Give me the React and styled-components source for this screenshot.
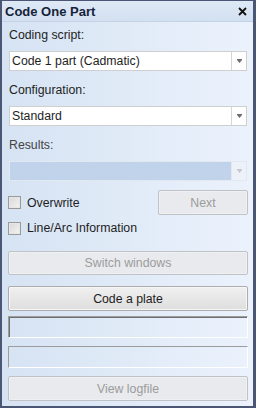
import React from "react";
import styled, { createGlobalStyle } from "styled-components";

const Global = createGlobalStyle`
  html, body { margin: 0; padding: 0; width: 256px; height: 408px; overflow: hidden; }
  body { font-family: "Liberation Sans", Arial, sans-serif; }
`;

const Window = styled.div`
  box-sizing: border-box;
  width: 256px;
  height: 408px;
  border-style: solid;
  border-color: #4b5574;
  border-width: 1px 3px 2px 2px;
  background: linear-gradient(to right, #d6e3f3, #ebf2fc);
  display: flex;
  flex-direction: column;
  font-size: 12.3px;
  color: #1e1e1e;
`;

const TitleBar = styled.div`
  height: 20px;
  flex: none;
  display: flex;
  align-items: center;
  justify-content: space-between;
  padding: 0 6px 0 3px;
  background: linear-gradient(to bottom, #dfe9f6, #d3e0f1);
  border-bottom: 1px solid #c4d2e6;
`;

const Title = styled.span`
  font-weight: bold;
  font-size: 13px;
  color: #15233a;
`;

const Content = styled.div`
  display: flex;
  flex-direction: column;
  padding: 0 5px 0 6px;
`;

const Label = styled.div`
  height: 16px;
  line-height: 16px;
  margin-top: ${(p) => p.$mt}px;
  padding-left: 1px;
  color: ${(p) => (p.$disabled ? "#444" : "#1e1e1e")};
`;

const Select = styled.div`
  box-sizing: border-box;
  height: 20px;
  margin: 8px 1px 0 1px;
  display: flex;
  border: 1px solid ${(p) => (p.$disabled ? "#e2e8f0" : "#cfcfcf")};
  background: ${(p) => (p.$disabled ? "#c1d3ea" : "#fff")};
`;

const SelectText = styled.div`
  flex: 1;
  line-height: 18px;
  padding-left: 2px;
`;

const ArrowBox = styled.div`
  width: 14px;
  border-left: 1px solid ${(p) => (p.$disabled ? "#e2e8f0" : "#d6d6d6")};
  background: ${(p) => (p.$disabled ? "#edf2f8" : "#fff")};
  display: flex;
  align-items: center;
  justify-content: center;
`;

const Arrow = ({ disabled }) => (
  <svg width="5" height="4" viewBox="0 0 5 4">
    <path d="M0 0h5v1H0zM0 1h5L2.5 4z" fill={disabled ? "#c8c8c8" : "#6e6e6e"} />
  </svg>
);

const Row = styled.div`
  display: flex;
  align-items: center;
  justify-content: space-between;
  margin-top: ${(p) => p.$mt}px;
  height: ${(p) => p.$h}px;
`;

const Check = styled.label`
  display: flex;
  align-items: center;
  gap: 6px;
`;

const Box = styled.span`
  box-sizing: border-box;
  width: 13px;
  height: 13px;
  border: 1px solid #9a9a9a;
  background: linear-gradient(135deg, #d8d8d8, #f4f4f4);
  box-shadow: inset 0 0 0 1px #e6e6e6;
`;

const Button = styled.div`
  box-sizing: border-box;
  width: ${(p) => p.$w || "240px"};
  height: ${(p) => p.$h}px;
  margin-top: ${(p) => p.$mt || 0}px;
  border: 1px solid ${(p) => (p.$disabled ? "#bfc3c8" : "#acacac")};
  border-radius: 2px;
  display: flex;
  align-items: center;
  justify-content: center;
  color: ${(p) => (p.$disabled ? "#9c9c9c" : "#1e1e1e")};
  background: ${(p) =>
    p.$disabled ? "#e8eaed" : "linear-gradient(to bottom, #f0f0f0, #dedede)"};
  box-shadow: inset 0 0 0 1px ${(p) => (p.$disabled ? "#eef0f2" : "#f6f6f6")};
`;

const Field = styled.div`
  box-sizing: border-box;
  width: 240px;
  height: 22px;
  margin-top: ${(p) => p.$mt}px;
  border-style: solid;
  border-width: 1px;
  border-color: #9c9c9c #ffffff #ffffff #9c9c9c;
  box-shadow: ${(p) => (p.$focus ? "inset 1px 1px 0 #6f6f6f" : "none")};
`;

const Close = () => (
  <svg width="9" height="9" viewBox="0 0 9 9">
    <path d="M1 1l7 7M8 1L1 8" stroke="#111" strokeWidth="1.8" />
  </svg>
);

export default function App() {
  return (
    <>
      <Global />
      <Window>
        <TitleBar>
          <Title>Code One Part</Title>
          <Close />
        </TitleBar>
        <Content>
          <Label $mt={5}>Coding script:</Label>
          <Select>
            <SelectText>Code 1 part (Cadmatic)</SelectText>
            <ArrowBox><Arrow /></ArrowBox>
          </Select>
          <Label $mt={11}>Configuration:</Label>
          <Select>
            <SelectText>Standard</SelectText>
            <ArrowBox><Arrow /></ArrowBox>
          </Select>
          <Label $mt={11} $disabled>Results:</Label>
          <Select $disabled>
            <SelectText />
            <ArrowBox $disabled><Arrow disabled /></ArrowBox>
          </Select>
          <Row $mt={9} $h={25}>
            <Check><Box />Overwrite</Check>
            <Button $w="90px" $h={25} $disabled>Next</Button>
          </Row>
          <Row $mt={1} $h={24}>
            <Check><Box />Line/Arc Information</Check>
          </Row>
          <Button $h={24} $mt={11} $disabled>Switch windows</Button>
          <Button $h={25} $mt={11}>Code a plate</Button>
          <Field $mt={5} $focus />
          <Field $mt={8} />
          <Button $h={25} $mt={8} $disabled>View logfile</Button>
        </Content>
      </Window>
    </>
  );
}
